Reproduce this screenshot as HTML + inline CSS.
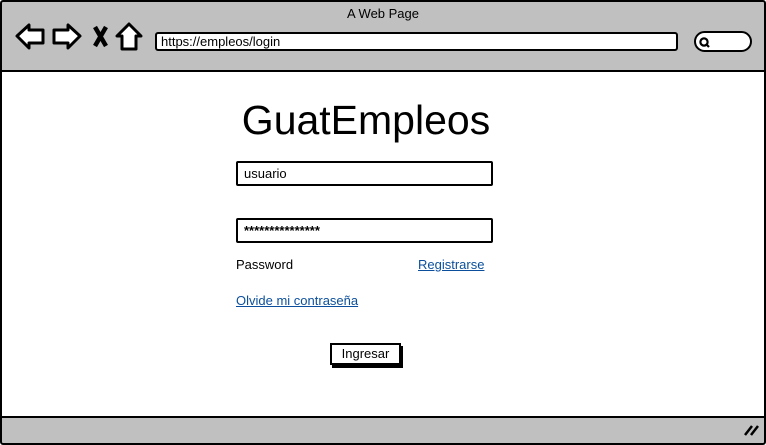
<!DOCTYPE html>
<html><head><meta charset="utf-8"><style>
*{margin:0;padding:0;box-sizing:border-box}
body{width:766px;height:445px;background:#fff;font-family:"Liberation Sans",sans-serif;position:relative;overflow:hidden}
.frame{position:absolute;left:0;top:0;width:766px;height:445px;border:2px solid #000;border-radius:3px}
.top{position:absolute;left:2px;top:2px;width:762px;height:70px;background:#c0c0c0;border-bottom:2px solid #000}
.bot{position:absolute;left:2px;top:416px;width:762px;height:27px;background:#c0c0c0;border-top:2px solid #000}
.abs{position:absolute}
.title{left:0;width:766px;top:6px;text-align:center;font-size:13px}
.url{left:155px;top:32px;width:523px;height:19px;background:#fff;border:2px solid #000;border-radius:3px;font-size:13px;padding-left:4px;line-height:15px}
.search{left:694px;top:31px;width:58px;height:21px;background:#fff;border:2px solid #000;border-radius:11px}
.h1{left:216px;width:300px;top:97px;text-align:center;font-size:41px}
.inp{left:236px;width:257px;height:25px;border:2px solid #000;border-radius:2px;font-size:13px;padding-left:6px;line-height:21px}
.lbl{font-size:13px}
.lnk{font-size:13px;color:#0b4f9c;text-decoration:underline}
.btn{left:330px;top:343px;width:71px;height:22px;border:2px solid #000;font-size:13px;text-align:center;line-height:18px;box-shadow:2px 3px 0 #000;background:#fff}
</style></head><body>
<div class="top"></div>
<div class="bot"></div>
<div class="frame"></div>
<div class="abs title">A Web Page</div>
<svg class="abs" style="left:14px;top:22px" width="132" height="30" viewBox="0 0 132 30">
<g fill="#fff" stroke="#000" stroke-width="3" stroke-linejoin="round">
<path d="M3 14 L15 3 L15 8 L29 8 L29 21 L15 21 L15 26 Z"/>
<path d="M66 14 L54 3 L54 8 L40 8 L40 21 L54 21 L54 26 Z"/>
<path d="M115 2 L103 14 L108 14 L108 27 L122 27 L122 14 L127 14 Z"/>
</g>
<path d="M81 5 L92 24 M92 5 L81 24" stroke="#000" stroke-width="4.5"/>
</svg>
<div class="abs url">https://empleos/login</div>
<div class="abs search"></div>
<svg class="abs" style="left:698px;top:36px" width="14" height="14"><circle cx="6" cy="6" r="3.6" fill="none" stroke="#000" stroke-width="2.2"/><path d="M8.5 8.5 L11 11" stroke="#000" stroke-width="2.2"/></svg>
<div class="abs h1">GuatEmpleos</div>
<div class="abs inp" style="top:161px">usuario</div>
<div class="abs inp" style="top:218px;font-weight:bold">***************</div>
<div class="abs lbl" style="left:236px;top:257px">Password</div>
<div class="abs lnk" style="left:418px;top:257px">Registrarse</div>
<div class="abs lnk" style="left:236px;top:293px">Olvide mi contraseña</div>
<div class="abs btn">Ingresar</div>
<svg class="abs" style="left:742px;top:422px" width="20" height="16"><path d="M3 13 L10 4 M9 13 L16 4" stroke="#000" stroke-width="2.5"/></svg>
</body></html>
